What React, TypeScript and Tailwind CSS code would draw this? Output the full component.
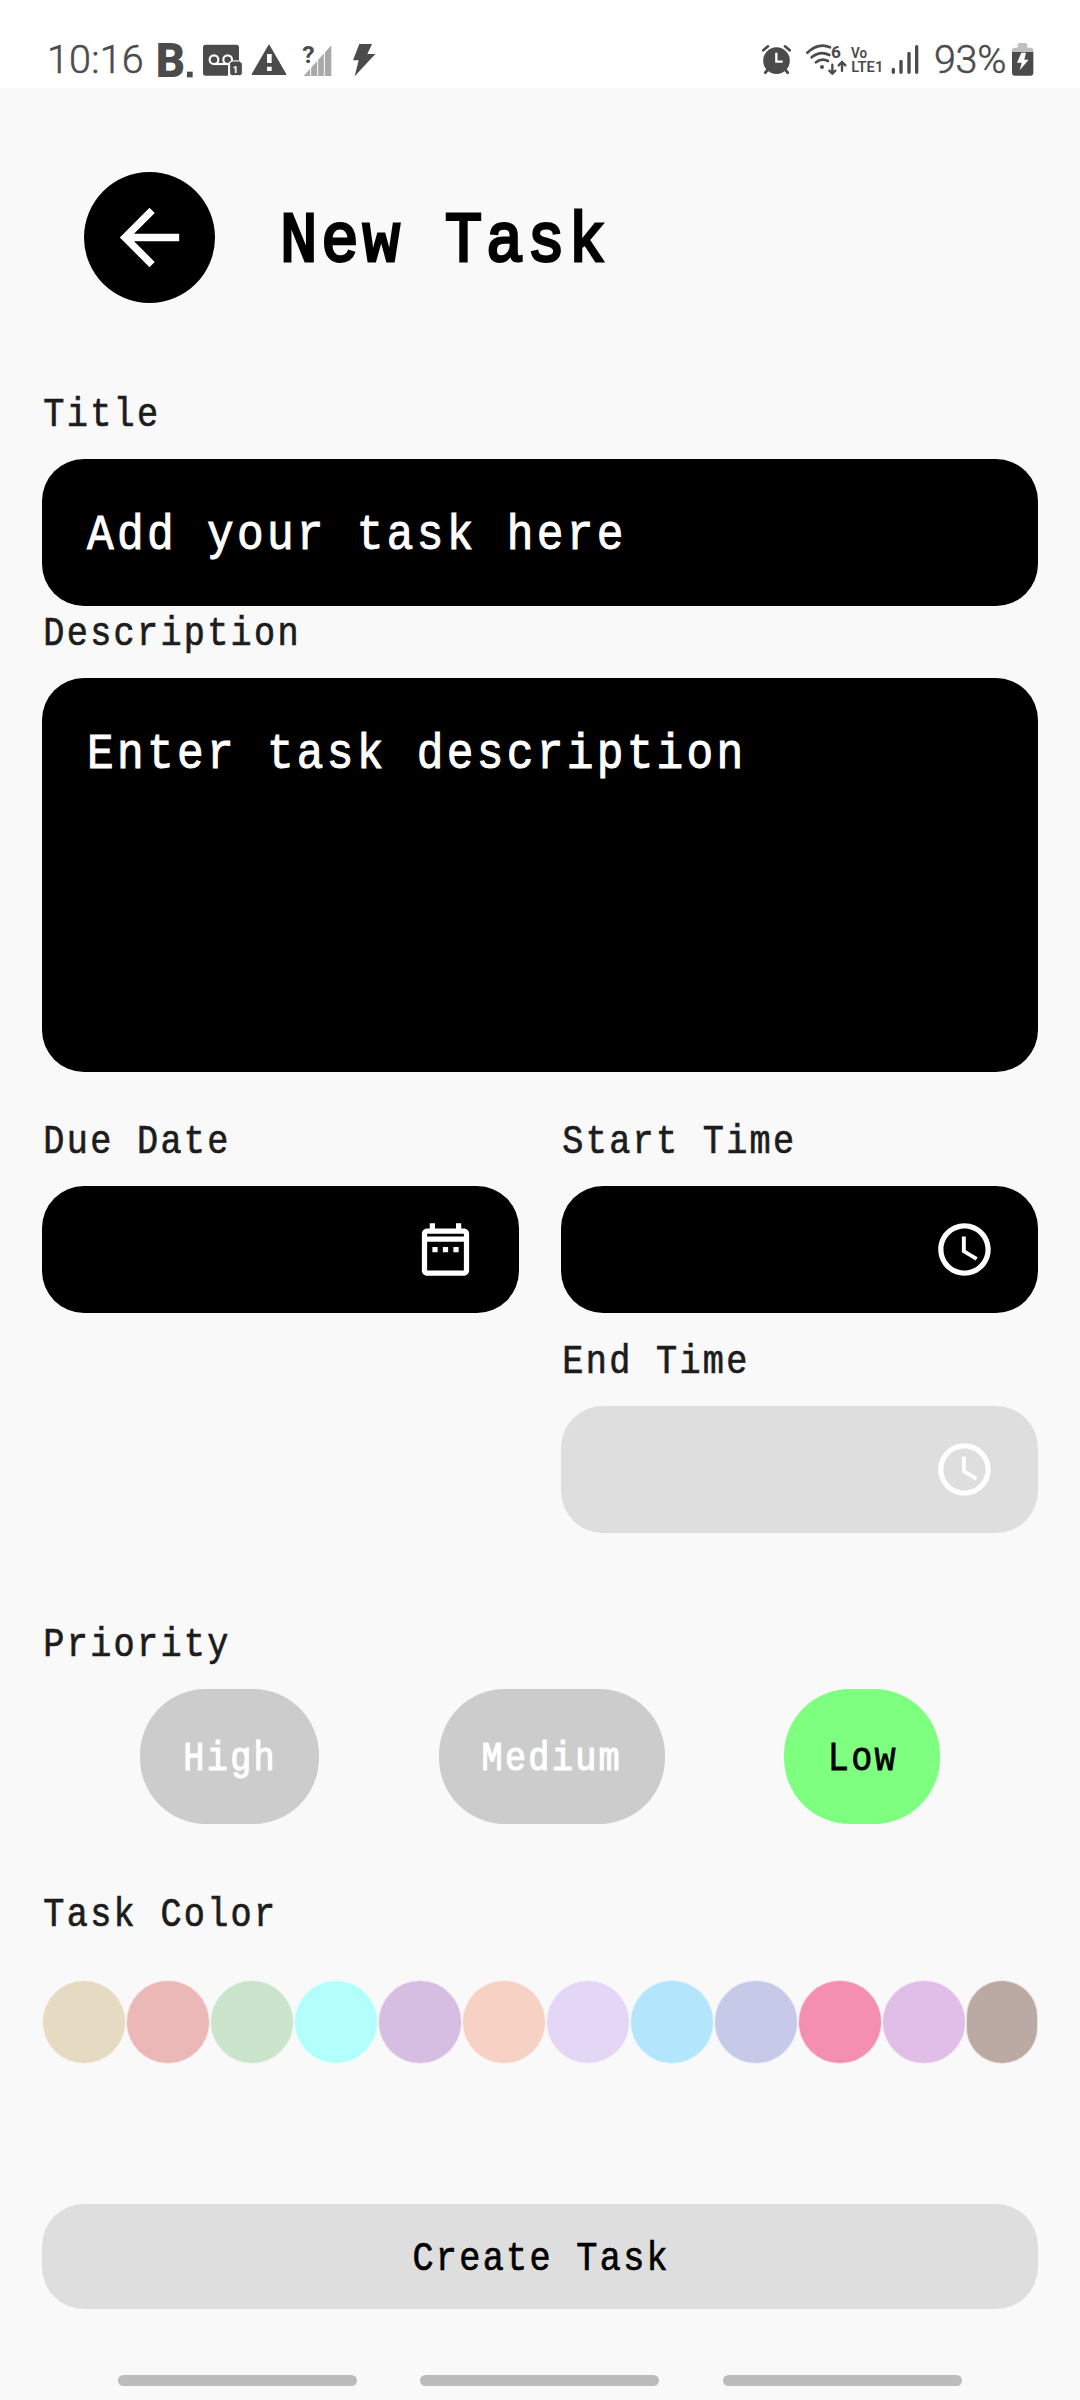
import React from 'react';

const INK = '#4b4b4b';

const SWATCHES = [
  'bg-[#e6dac3]',
  'bg-[#ebb8b7]',
  'bg-[#cbe5cc]',
  'bg-[#b2fffb]',
  'bg-[#d6bde2]',
  'bg-[#f7d1c4]',
  'bg-[#e4d7f5]',
  'bg-[#b3e6fd]',
  'bg-[#c6cae8]',
  'bg-[#f58fb1]',
  'bg-[#e0bee7]',
  'bg-[#bbaaa3]',
];

function StatusBar() {
  return (
    <header className="flex h-[88px] items-start bg-white pt-[42px] pl-[47px] font-['Roboto',sans-serif] text-[#4b4b4b]">
      <span className="w-[108px] text-[39.5px] leading-[36px] font-light tracking-[0.2px] [-webkit-text-stroke:0.5px]">10:16</span>

      {/* B. app notification */}
      <svg className="h-[36px] w-[42px] overflow-visible" viewBox="466 66 126 108" fill={INK} fontFamily="Roboto, sans-serif" fontWeight="900">
        <text x="468" y="172" fontSize="144" textLength="88" lengthAdjust="spacingAndGlyphs">B</text>
        <rect x="562" y="155" width="17" height="17" />
      </svg>

      {/* voicemail */}
      <svg className="ml-[6px] h-[36px] w-[40px]" viewBox="609 66 120 108" fill={INK}>
        <path d="M617 74h92q8 0 8 8v40h-18q-15 0-15 15v30h-67q-8 0-8-8V82q0-8 8-8z" />
        <g fill="none" stroke="#fff" strokeWidth="6.5">
          <circle cx="642" cy="119" r="13" />
          <circle cx="683" cy="119" r="13" />
          <path d="M642 132h42" />
        </g>
        <path d="M695 123h24l8 8v28q0 8-8 8h-22q-8 0-8-8v-29z" stroke="#fff" strokeWidth="3" />
        <text x="698" y="158" fontSize="27" fontWeight="900" fill="#fff" fontFamily="Roboto, sans-serif">1</text>
      </svg>

      {/* warning */}
      <svg className="ml-[8px] h-[36px] w-[36px]" viewBox="753 66 108 108">
        <path d="M807 76L857 163H757z" fill={INK} stroke={INK} strokeWidth="4" strokeLinejoin="round" />
        <path d="M801 102h14v27h-14zM801 140h14v13h-14z" fill="#fff" />
      </svg>

      {/* unknown signal */}
      <svg className="ml-[15px] h-[36px] w-[30px] overflow-visible" viewBox="906 66 90 108">
        <path d="M911 168L994 76V168z" fill="#a9a9a9" />
        <path d="M932 130v40M953 110v60M973 80v90" stroke="#fff" strokeWidth="3" />
        <text
          x="907"
          y="129"
          fontSize="74"
          fontWeight="700"
          textLength="37"
          lengthAdjust="spacingAndGlyphs"
          fill={INK}
          stroke="#fff"
          strokeWidth="6"
          paintOrder="stroke"
          fontFamily="Roboto, sans-serif"
        >
          ?
        </text>
      </svg>

      {/* charging bolt */}
      <svg className="ml-[20px] h-[36px] w-[24px]" viewBox="1056 66 72 108" fill={INK}>
        <path d="M1078 72H1116L1102 102H1126L1064 169L1076 121H1059z" />
      </svg>

      {/* alarm */}
      <svg className="ml-[386px] h-[36px] w-[30px]" viewBox="66 66 90 108">
        <path d="M70 91L84 79M149 91L135 79" stroke={INK} strokeWidth="8" strokeLinecap="round" />
        <path d="M84 148L76 158M135 148L143 158" stroke={INK} strokeWidth="9" strokeLinecap="round" />
        <circle cx="109.500" cy="122" r="40" fill={INK} />
        <path d="M109 98V125H128" fill="none" stroke="#fff" strokeWidth="7" />
      </svg>

      {/* wifi 6 */}
      <svg className="ml-[14px] h-[36px] w-[41px] overflow-visible" viewBox="198 66 123 108">
        <g fill="none" stroke={INK} strokeWidth="8" strokeLinecap="round">
          <path d="M202 98Q236 67 270 82" />
          <path d="M215 112Q240 91 268 105" />
          <path d="M228 127Q245 113 264 123" />
          <path d="M277 134V160M268 152L277 161L286 152M306 153V126M296 136L306 126L316 136" strokeWidth="7" />
        </g>
        <circle cx="246" cy="141" r="6" fill={INK} />
        <text x="273" y="115" fontSize="52" fontWeight="700" fill={INK} fontFamily="Roboto, sans-serif">6</text>
      </svg>

      {/* VoLTE */}
      <svg className="ml-[4px] h-[36px] w-[32px] overflow-visible" viewBox="333 66 96 108" fill={INK} fontFamily="Roboto, sans-serif" fontWeight="600">
        <text x="333" y="113" fontSize="44" textLength="48" lengthAdjust="spacingAndGlyphs">Vo</text>
        <text x="334" y="156" fontSize="45" textLength="96" lengthAdjust="spacingAndGlyphs">LTE1</text>
      </svg>

      {/* signal strength */}
      <svg className="ml-[8px] h-[36px] w-[29px]" viewBox="453 66 87 108">
        <path d="M460 148V157M483 124V157M507 100V157M530 80V157" stroke={INK} strokeWidth="10" strokeLinecap="round" />
      </svg>

      <span className="ml-[14px] w-[77px] text-[39.5px] leading-[36px] font-light tracking-[-0.3px] [-webkit-text-stroke:0.5px]">93%</span>

      {/* battery */}
      <svg className="h-[36px] w-[23px]" viewBox="813 66 69 108">
        <path d="M816 98V91q0-8 8-8h9v-7q0-7 7-7h15q7 0 7 7v7h10q8 0 8 8v7z" fill="#bfbfbf" />
        <path d="M816 96H880V158q0 9-9 9H825q-9 0-9-9z" fill={INK} />
        <path d="M844 98H858L853 119H866L839 151L845 128H831z" fill="#fff" />
      </svg>
    </header>
  );
}

function Label({ children }: { children: React.ReactNode }) {
  return (
    <p className="h-[48px] origin-left scale-x-[0.88] pl-[1.5px] text-[40px] leading-[50px] tracking-[2.6px] whitespace-nowrap text-[#1c1c1c] [-webkit-text-stroke:0.7px]">
      {children}
    </p>
  );
}

function ClockIcon() {
  return (
    <svg className="size-[63px]" viewBox="0 0 24 24" fill="#fff">
      <path d="M11.990 2C6.470 2 2 6.480 2 12s4.470 10 9.990 10C17.520 22 22 17.520 22 12S17.520 2 11.990 2zM12 20c-4.420 0-8-3.580-8-8s3.580-8 8-8 8 3.580 8 8-3.580 8-8 8z" />
      <path d="M12.500 7H11v6l5.250 3.150.75-1.230-4.500-2.670z" />
    </svg>
  );
}

function CalendarIcon() {
  return (
    <svg className="size-[63px]" viewBox="0 0 24 24" fill="#fff">
      <path d="M9 11H7v2h2v-2zm4 0h-2v2h2v-2zm4 0h-2v2h2v-2zm2-7h-1V2h-2v2H8V2H6v2H5c-1.110 0-1.990.9-1.990 2L3 20c0 1.100.89 2 2 2h14c1.100 0 2-.9 2-2V6c0-1.100-.9-2-2-2zm0 16H5V9h14v11zm0-13H5V6h14v1z" />
    </svg>
  );
}

function Field({ text, className }: { text: string; className: string }) {
  return (
    <div className={`mt-5 rounded-[42px] bg-black pt-[47px] pl-[45px] ${className}`}>
      <p className="origin-left scale-x-[0.89] text-[50px] leading-[60px] tracking-[3.68px] whitespace-nowrap text-white [-webkit-text-stroke:1px]">
        {text}
      </p>
    </div>
  );
}

function Picker({ label, icon, className }: { label: string; icon: React.ReactNode; className: string }) {
  return (
    <div>
      <Label>{label}</Label>
      <div className={`mt-5 flex h-[127px] items-center justify-end rounded-[42px] pr-[42px] ${className}`}>{icon}</div>
    </div>
  );
}

function Pill({ label, className }: { label: string; className: string }) {
  return (
    <button className={`flex h-[135px] items-center justify-center rounded-[66px] pt-[7px] ${className}`}>
      <span className="scale-x-[0.88] pl-[1px] text-[40px] leading-[48px] tracking-[2.6px]">{label}</span>
    </button>
  );
}

export default function App() {
  return (
    <div className="flex h-[2400px] w-[1080px] flex-col overflow-hidden bg-[#f9f9f9] font-['Liberation_Mono',monospace]">
      <StatusBar />

      <div className="mt-[84px] flex h-[131px] items-center pl-[84px]">
        <button className="flex size-[131px] items-center justify-center rounded-full bg-black">
          <svg className="size-[89px]" viewBox="0 0 24 24" fill="#fff">
            <path d="M20 11H7.830l5.590-5.590L12 4l-8 8 8 8 1.410-1.410L7.830 13H20v-2z" />
          </svg>
        </button>
        <h1 className="mt-[8px] ml-[65px] origin-left scale-x-[0.88] text-[71px] leading-[84px] tracking-[4.2px] whitespace-nowrap text-black [-webkit-text-stroke:3px]">
          New Task
        </h1>
      </div>

      <main className="mt-[88px] flex flex-col px-[42px]">
        <Label>Title</Label>
        <Field text="Add your task here" className="h-[147px]" />
        <div className="mt-[4px]">
          <Label>Description</Label>
        </div>
        <Field text="Enter task description" className="h-[394px]" />

        <div className="mt-[46px] grid grid-cols-2 gap-x-[42px]">
          <Picker label="Due Date" icon={<CalendarIcon />} className="bg-black" />
          <div className="flex flex-col gap-[25px]">
            <Picker label="Start Time" icon={<ClockIcon />} className="bg-black" />
            <Picker label="End Time" icon={<ClockIcon />} className="bg-[#dedede]" />
          </div>
        </div>

        <div className="mt-[88px]">
          <Label>Priority</Label>
        </div>
        <div className="mt-5 flex justify-between px-[98px]">
          <Pill label="High" className="w-[179px] bg-[#cccccc] text-white [-webkit-text-stroke:1.2px]" />
          <Pill label="Medium" className="w-[226px] bg-[#cccccc] text-white [-webkit-text-stroke:1.2px]" />
          <Pill label="Low" className="w-[156px] bg-[#7eff80] text-black [-webkit-text-stroke:0.8px]" />
        </div>

        <div className="mt-[67px]">
          <Label>Task Color</Label>
        </div>
        <div className="mt-[41px] flex">
          {SWATCHES.map((color, i) => (
            <div
              key={color}
              className={`h-[84px] rounded-[42px] border border-white/70 ${i === SWATCHES.length - 1 ? 'w-[72px]' : 'w-[84px]'} ${color}`}
            />
          ))}
        </div>

        <button className="mt-[140px] flex h-[105px] items-center justify-center rounded-[42px] bg-[#dedede] pt-[7px] text-black [-webkit-text-stroke:0.7px]">
          <span className="scale-x-[0.88] pl-[2px] text-[40px] leading-[48px] tracking-[2.6px]">Create Task</span>
        </button>
      </main>

      <nav className="mt-[66px] flex pl-[118px]">
        <div className="h-[11px] w-[239px] rounded-[5.5px] bg-[#bbbbbb]" />
        <div className="ml-[63px] h-[11px] w-[239px] rounded-[5.5px] bg-[#bbbbbb]" />
        <div className="ml-[64px] h-[11px] w-[239px] rounded-[5.5px] bg-[#bbbbbb]" />
      </nav>
    </div>
  );
}
